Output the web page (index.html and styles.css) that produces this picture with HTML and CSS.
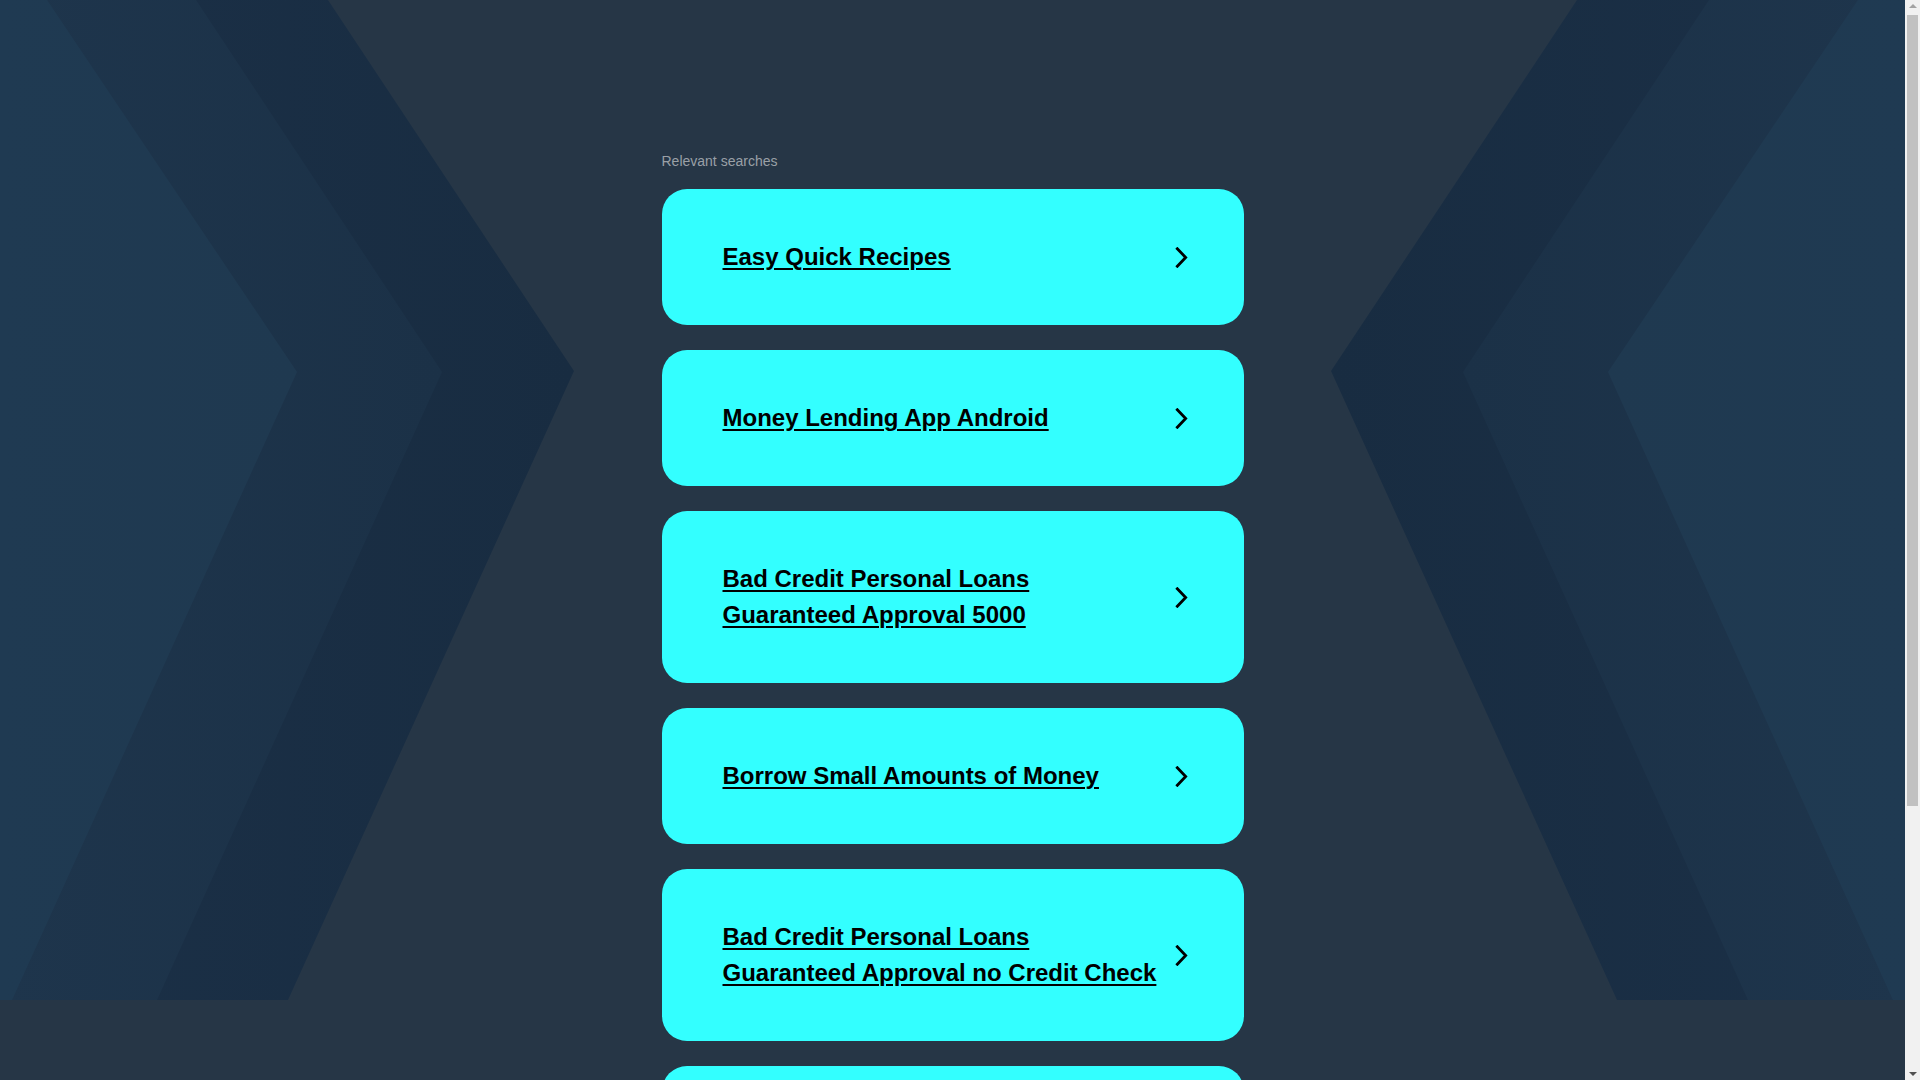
FILE: index.html
```html
<!DOCTYPE html>
<html lang="en">
<head>
<meta charset="utf-8">
<title>Relevant searches</title>
<link rel="stylesheet" href="styles.css">
</head>
<body>
<div class="page">
  <svg class="backdrop" viewBox="0 0 1905 1000" preserveAspectRatio="none" aria-hidden="true">
    <defs>
      <linearGradient id="gDark" x1="0" y1="0" x2="1" y2="0">
        <stop offset="0" stop-color="#1b3047"/>
        <stop offset="1" stop-color="#182c41"/>
      </linearGradient>
      <linearGradient id="gMid" x1="0" y1="0" x2="1" y2="0">
        <stop offset="0" stop-color="#1e354c"/>
        <stop offset="1" stop-color="#1b3147"/>
      </linearGradient>
      <linearGradient id="gLight" x1="0" y1="0" x2="1" y2="0">
        <stop offset="0" stop-color="#1f3a52"/>
        <stop offset="1" stop-color="#1f3950"/>
      </linearGradient>
      <g id="side">
        <polygon points="0,0 328,0 574,371 288,1000 0,1000" fill="url(#gDark)"/>
        <polygon points="0,0 196,0 442,372 157,1000 0,1000" fill="url(#gMid)"/>
        <polygon points="0,0 47,0 297,372 12,1000 0,1000" fill="url(#gLight)"/>
      </g>
    </defs>
    <use href="#side"/>
    <use href="#side" transform="translate(1905,0) scale(-1,1)"/>
  </svg>

  <main class="main">
    <p class="heading">Relevant searches</p>
    <ul class="list">
      <li class="card"><a class="link" href="#"><span class="label">Easy Quick Recipes</span><svg class="chev" viewBox="0 0 14 22"><polyline points="2.5,1.5 11.5,11 2.5,20.5"/></svg></a></li>
      <li class="card"><a class="link" href="#"><span class="label">Money Lending App Android</span><svg class="chev" viewBox="0 0 14 22"><polyline points="2.5,1.5 11.5,11 2.5,20.5"/></svg></a></li>
      <li class="card"><a class="link" href="#"><span class="label">Bad Credit Personal Loans Guaranteed Approval 5000</span><svg class="chev" viewBox="0 0 14 22"><polyline points="2.5,1.5 11.5,11 2.5,20.5"/></svg></a></li>
      <li class="card"><a class="link" href="#"><span class="label">Borrow Small Amounts of Money</span><svg class="chev" viewBox="0 0 14 22"><polyline points="2.5,1.5 11.5,11 2.5,20.5"/></svg></a></li>
      <li class="card"><a class="link" href="#"><span class="label">Bad Credit Personal Loans Guaranteed Approval no Credit Check</span><svg class="chev" viewBox="0 0 14 22"><polyline points="2.5,1.5 11.5,11 2.5,20.5"/></svg></a></li>
      <li class="card"><a class="link" href="#"><span class="label">Instant Personal Loans Online</span><svg class="chev" viewBox="0 0 14 22"><polyline points="2.5,1.5 11.5,11 2.5,20.5"/></svg></a></li>
    </ul>
  </main>
</div>
<div class="scrollbar" aria-hidden="true">
  <span class="arrow arrow-up"></span>
  <span class="thumb"></span>
  <span class="arrow arrow-down"></span>
</div>
</body>
</html>
```

FILE: styles.css
```css
html, body {
  margin: 0;
  padding: 0;
}

html {
  scrollbar-width: none;
}

body {
  background: #263646;
  font-family: "Liberation Sans", Arial, sans-serif;
}

.page {
  position: relative;
  width: calc(100% - 15px);
  min-height: 1434px;
}

.backdrop {
  position: absolute;
  top: 0;
  left: 0;
  width: 100%;
  height: 1000px;
  z-index: 0;
  display: block;
}

.main {
  position: relative;
  z-index: 1;
  width: 582px;
  margin: 0 auto;
  padding: 153px 0 232px;
}

.heading {
  margin: 0 0 20px;
  font-size: 14px;
  line-height: 16px;
  color: #9aa0a6;
}

.list {
  list-style: none;
  margin: 0;
  padding: 0;
  display: flex;
  flex-direction: column;
  gap: 25px;
}

.card {
  background: #33ffff;
  border-radius: 25px;
}

.link {
  display: flex;
  align-items: center;
  gap: 12px;
  padding: 50px 56px 50px 61px;
  color: #000;
  text-decoration: none;
}

.label {
  flex: 1;
  font-size: 24px;
  line-height: 36px;
  font-weight: bold;
  color: #000;
  text-decoration: underline;
  text-decoration-thickness: 2px;
  text-underline-offset: 3px;
}

.chev {
  width: 13px;
  height: 21px;
  flex: none;
}

.chev polyline {
  fill: none;
  stroke: #000;
  stroke-width: 3;
  stroke-linecap: square;
  stroke-linejoin: miter;
}

.scrollbar {
  position: fixed;
  top: 0;
  right: 0;
  width: 15px;
  height: 100vh;
  background: #f1f1f1;
  z-index: 10;
  display: flex;
  flex-direction: column;
  align-items: center;
}

.arrow {
  flex: none;
  width: 0;
  height: 0;
  border-left: 4px solid transparent;
  border-right: 4px solid transparent;
}

.arrow-up {
  margin-top: 4px;
  border-bottom: 4px solid #a3a3a3;
}

.arrow-down {
  margin-top: auto;
  margin-bottom: 4px;
  border-top: 4px solid #505050;
}

.thumb {
  flex: none;
  width: 11px;
  height: 791px;
  margin-top: 7px;
  background: #c1c1c1;
}
```
